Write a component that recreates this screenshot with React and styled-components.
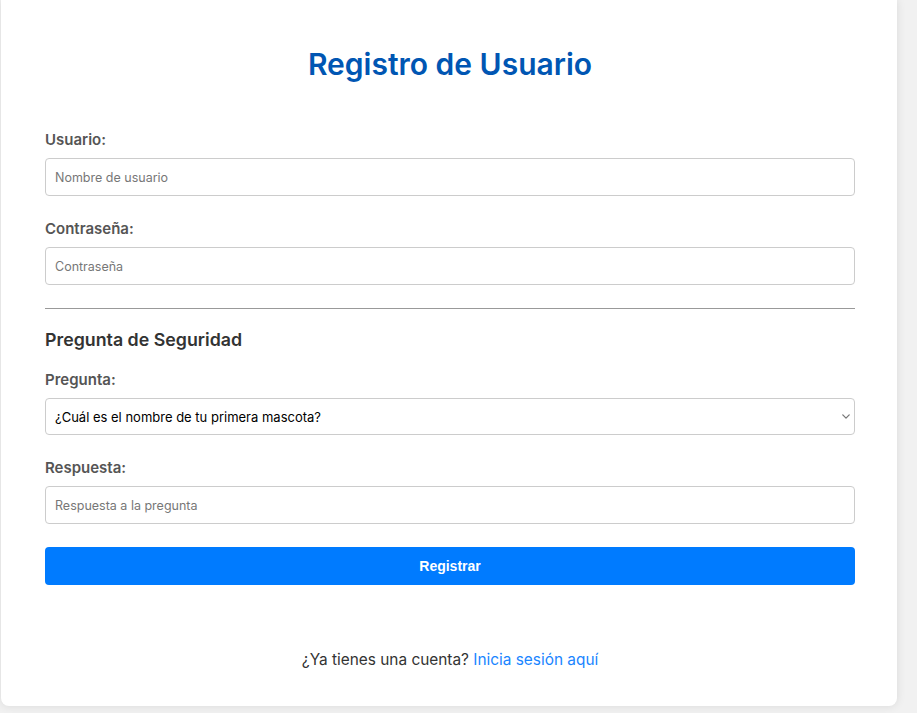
import React from "react";
import styled, { createGlobalStyle } from "styled-components";

const GlobalStyle = createGlobalStyle`
  * {
    box-sizing: border-box;
  }
  body {
    margin: 0;
    background: #f1f1f1;
    font-family: Inter, "Open Sans", sans-serif;
    color: #333;
  }
`;

function App() {
  return (
    <>
      <GlobalStyle />
      <Page>
        <Card>
          <Title>Registro de Usuario</Title>
          <form onSubmit={(e) => e.preventDefault()}>
            <Field>
              <Label htmlFor="usuario">Usuario:</Label>
              <Input id="usuario" type="text" placeholder="Nombre de usuario" />
            </Field>
            <Field>
              <Label htmlFor="password">Contraseña:</Label>
              <Input id="password" type="password" placeholder="Contraseña" />
            </Field>
            <Divider />
            <SectionTitle>Pregunta de Seguridad</SectionTitle>
            <Field>
              <Label htmlFor="pregunta">Pregunta:</Label>
              <SelectWrap>
                <Select id="pregunta" defaultValue="mascota">
                  <option value="mascota">¿Cuál es el nombre de tu primera mascota?</option>
                  <option value="ciudad">¿En qué ciudad naciste?</option>
                  <option value="madre">¿Cuál es el apellido de soltera de tu madre?</option>
                </Select>
                <Chevron viewBox="0 0 10 6" aria-hidden="true">
                  <path d="M1 1l4 4 4-4" />
                </Chevron>
              </SelectWrap>
            </Field>
            <Field>
              <Label htmlFor="respuesta">Respuesta:</Label>
              <Input id="respuesta" type="text" placeholder="Respuesta a la pregunta" />
            </Field>
            <SubmitButton type="submit">Registrar</SubmitButton>
          </form>
          <Footer>
            ¿Ya tienes una cuenta? <FooterLink href="#">Inicia sesión aquí</FooterLink>
          </Footer>
        </Card>
      </Page>
    </>
  );
}

export default App;

const Page = styled.div`
  padding-left: 1px;
  min-height: 713px;
`;

const Card = styled.div`
  width: 896px;
  background: #fff;
  border-radius: 0 0 8px 8px;
  box-shadow: 0 0 10px rgba(0, 0, 0, 0.1);
  padding: 44px 42px 34px 44px;
`;

const Title = styled.h2`
  margin: 0 0 46px;
  text-align: center;
  font-size: 30px;
  line-height: 40px;
  font-weight: 600;
  color: #0056b3;
`;

const Field = styled.div`
  margin-bottom: 23px;
`;

const Label = styled.label`
  display: block;
  margin-bottom: 8px;
  font-size: 15px;
  line-height: 20px;
  font-weight: 600;
  color: #555;
`;

const Input = styled.input`
  display: block;
  width: 100%;
  height: 38px;
  padding: 0 9px;
  border: 1px solid #ccc;
  border-radius: 4px;
  font-family: Inter, "Open Sans", sans-serif;
  font-size: 12.5px;
  color: #333;
  outline: none;
  &::placeholder {
    color: #777;
  }
`;

const SelectWrap = styled.div`
  position: relative;
`;

const Select = styled.select`
  display: block;
  width: 100%;
  height: 37px;
  padding: 0 9px;
  border: 1px solid #ccc;
  border-radius: 4px;
  background: #fff;
  appearance: none;
  font-family: Inter, "Open Sans", sans-serif;
  font-size: 13px;
  color: #000;
  outline: none;
`;

const Chevron = styled.svg`
  position: absolute;
  right: 5px;
  top: 16px;
  width: 8px;
  height: 5px;
  fill: none;
  stroke: #777;
  stroke-width: 1.6;
  stroke-linecap: round;
  stroke-linejoin: round;
  pointer-events: none;
`;

const Divider = styled.hr`
  margin: 22px 0 19px;
  border: none;
  border-top: 1px solid #999;
`;

const SectionTitle = styled.h3`
  margin: 0 0 18px;
  font-size: 17.8px;
  line-height: 24px;
  font-weight: 600;
  color: #333;
`;

const SubmitButton = styled.button`
  display: block;
  width: 100%;
  height: 38px;
  border: none;
  border-radius: 4px;
  background: #007bff;
  color: #fff;
  font-family: "Liberation Sans", Arial, sans-serif;
  font-size: 14px;
  font-weight: 700;
  cursor: pointer;
  &:hover {
    background: #0069d9;
  }
`;

const Footer = styled.p`
  margin: 63px 0 0;
  text-align: center;
  font-size: 15.4px;
  line-height: 24px;
  color: #333;
`;

const FooterLink = styled.a`
  color: #1a85ff;
  text-decoration: none;
`;
